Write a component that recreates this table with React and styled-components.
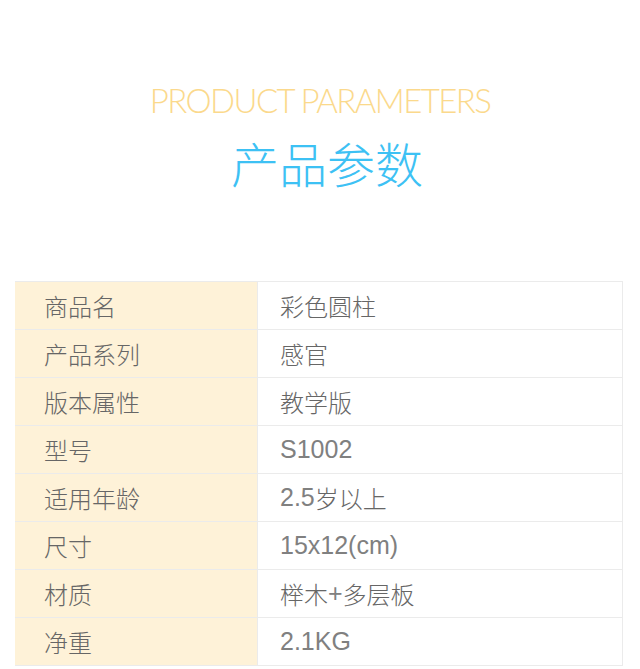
import React from 'react'
import styled, { createGlobalStyle } from 'styled-components'

const GlobalStyle = createGlobalStyle`
  html, body { margin: 0; padding: 0; background: #ffffff; }
  body { font-family: "Noto Sans CJK SC", "Noto Sans", sans-serif; }
`

const rows = [
    ['商品名', '彩色圆柱'],
    ['产品系列', '感官'],
    ['版本属性', '教学版'],
    ['型号', 'S1002'],
    ['适用年龄', '2.5岁以上'],
    ['尺寸', '15x12(cm)'],
    ['材质', '榉木+多层板'],
    ['净重', '2.1KG'],
]

// latin runs get a slightly bigger Arial-like face, as in the picture
function mixed(text) {
    return text.split(/([\x00-\x7F]+)/).filter(Boolean).map((part, i) =>
        /^[\x00-\x7F]+$/.test(part) ? <Latin key={i}>{part}</Latin> : <span key={i}>{part}</span>
    )
}

function App() {
    return (
        <Page>
            <GlobalStyle />
            <Heading>
                <EnTitle>PRODUCT PARAMETERS</EnTitle>
                <CnTitle>产品参数</CnTitle>
            </Heading>
            <Table>
                {rows.map(([label, value]) => (
                    <Row key={label}>
                        <Label>{label}</Label>
                        <Value>{mixed(value)}</Value>
                    </Row>
                ))}
            </Table>
        </Page>
    )
}

const Page = styled.div`
    width: 640px;
    height: 669px;
    overflow: hidden;
    background: #ffffff;
`

const Heading = styled.div`
    display: flex;
    flex-direction: column;
    align-items: center;
    padding-top: 80px;
    height: 281px;
    box-sizing: border-box;
`

const EnTitle = styled.div`
    font-family: Lato, "Open Sans", sans-serif;
    font-weight: 300;
    font-size: 33px;
    line-height: 40px;
    letter-spacing: -1.6px;
    color: #fbd98c;
`

const CnTitle = styled.div`
    margin-top: 14px;
    padding-left: 14px;
    font-family: "Noto Sans CJK SC", sans-serif;
    font-weight: 300;
    font-size: 48px;
    line-height: 56px;
    color: #3dc1f4;
`

const Table = styled.div`
    margin: 0 17px 0 15px;
    border-top: 1px solid #ebebeb;
    border-right: 1px solid #ebebeb;
`

const Row = styled.div`
    display: grid;
    grid-template-columns: 243px 1fr;
    height: 48px;
    border-bottom: 1px solid #ebebeb;
    box-sizing: border-box;
`

const Cell = styled.div`
    display: flex;
    align-items: center;
    font-family: "Noto Sans CJK SC", "Liberation Sans", sans-serif;
    font-size: 24px;
    font-weight: 300;
    color: #666666;
`

const Label = styled(Cell)`
    background: #fef2d8;
    padding-left: 29px;
    border-right: 1px solid #ebebeb;
`

const Value = styled(Cell)`
    padding-left: 22px;
`

const Latin = styled.span`
    font-family: "Liberation Sans", Arial, sans-serif;
    font-size: 25px;
    font-weight: 400;
    color: #808080;
`

export default App
